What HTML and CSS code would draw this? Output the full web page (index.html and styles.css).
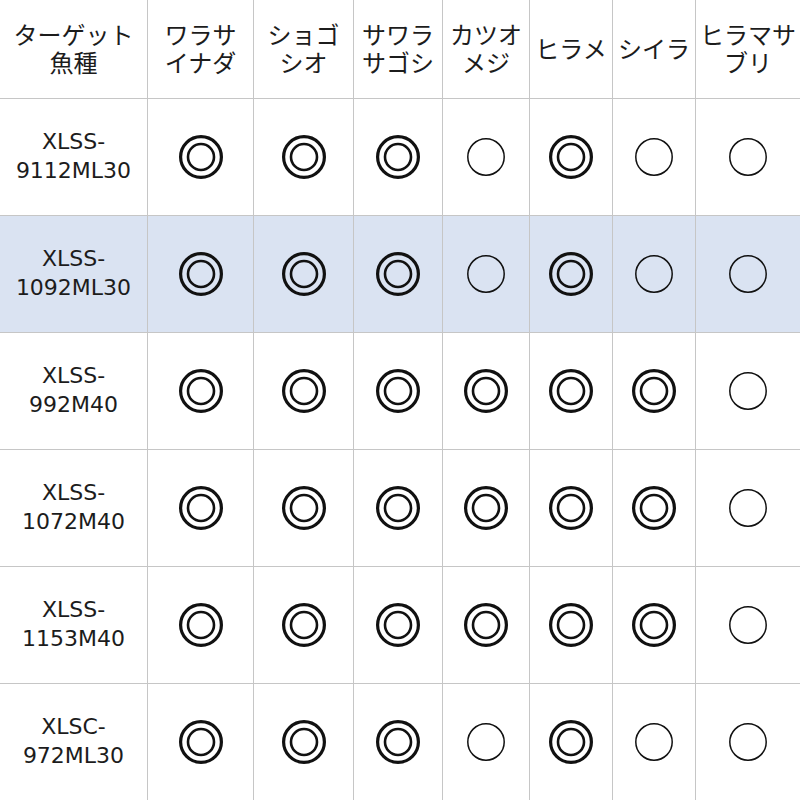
FILE: index.html
```html
<!DOCTYPE html>
<html lang="ja">
<head>
<meta charset="utf-8">
<link rel="stylesheet" href="styles.css">
</head>
<body>
<div class="chart">
  <div class="cell head">ターゲット<br>魚種</div>
  <div class="cell head">ワラサ<br>イナダ</div>
  <div class="cell head">ショゴ<br>シオ</div>
  <div class="cell head">サワラ<br>サゴシ</div>
  <div class="cell head">カツオ<br>メジ</div>
  <div class="cell head">ヒラメ</div>
  <div class="cell head">シイラ</div>
  <div class="cell head">ヒラマサ<br>ブリ</div>

  <div class="cell name">XLSS-<br>9112ML30</div>
  <div class="cell"><svg class="dbl" viewBox="0 0 46 46"><circle cx="23" cy="23" r="20.4"/><circle class="in" cx="23" cy="23" r="13"/></svg></div>
  <div class="cell"><svg class="dbl" viewBox="0 0 46 46"><circle cx="23" cy="23" r="20.4"/><circle class="in" cx="23" cy="23" r="13"/></svg></div>
  <div class="cell"><svg class="dbl" viewBox="0 0 46 46"><circle cx="23" cy="23" r="20.4"/><circle class="in" cx="23" cy="23" r="13"/></svg></div>
  <div class="cell"><svg class="sgl" viewBox="0 0 40 40"><circle cx="20" cy="20" r="18.2"/></svg></div>
  <div class="cell"><svg class="dbl" viewBox="0 0 46 46"><circle cx="23" cy="23" r="20.4"/><circle class="in" cx="23" cy="23" r="13"/></svg></div>
  <div class="cell"><svg class="sgl" viewBox="0 0 40 40"><circle cx="20" cy="20" r="18.2"/></svg></div>
  <div class="cell"><svg class="sgl" viewBox="0 0 40 40"><circle cx="20" cy="20" r="18.2"/></svg></div>

  <div class="cell name hl">XLSS-<br>1092ML30</div>
  <div class="cell hl"><svg class="dbl" viewBox="0 0 46 46"><circle cx="23" cy="23" r="20.4"/><circle class="in" cx="23" cy="23" r="13"/></svg></div>
  <div class="cell hl"><svg class="dbl" viewBox="0 0 46 46"><circle cx="23" cy="23" r="20.4"/><circle class="in" cx="23" cy="23" r="13"/></svg></div>
  <div class="cell hl"><svg class="dbl" viewBox="0 0 46 46"><circle cx="23" cy="23" r="20.4"/><circle class="in" cx="23" cy="23" r="13"/></svg></div>
  <div class="cell hl"><svg class="sgl" viewBox="0 0 40 40"><circle cx="20" cy="20" r="18.2"/></svg></div>
  <div class="cell hl"><svg class="dbl" viewBox="0 0 46 46"><circle cx="23" cy="23" r="20.4"/><circle class="in" cx="23" cy="23" r="13"/></svg></div>
  <div class="cell hl"><svg class="sgl" viewBox="0 0 40 40"><circle cx="20" cy="20" r="18.2"/></svg></div>
  <div class="cell hl"><svg class="sgl" viewBox="0 0 40 40"><circle cx="20" cy="20" r="18.2"/></svg></div>

  <div class="cell name">XLSS-<br>992M40</div>
  <div class="cell"><svg class="dbl" viewBox="0 0 46 46"><circle cx="23" cy="23" r="20.4"/><circle class="in" cx="23" cy="23" r="13"/></svg></div>
  <div class="cell"><svg class="dbl" viewBox="0 0 46 46"><circle cx="23" cy="23" r="20.4"/><circle class="in" cx="23" cy="23" r="13"/></svg></div>
  <div class="cell"><svg class="dbl" viewBox="0 0 46 46"><circle cx="23" cy="23" r="20.4"/><circle class="in" cx="23" cy="23" r="13"/></svg></div>
  <div class="cell"><svg class="dbl" viewBox="0 0 46 46"><circle cx="23" cy="23" r="20.4"/><circle class="in" cx="23" cy="23" r="13"/></svg></div>
  <div class="cell"><svg class="dbl" viewBox="0 0 46 46"><circle cx="23" cy="23" r="20.4"/><circle class="in" cx="23" cy="23" r="13"/></svg></div>
  <div class="cell"><svg class="dbl" viewBox="0 0 46 46"><circle cx="23" cy="23" r="20.4"/><circle class="in" cx="23" cy="23" r="13"/></svg></div>
  <div class="cell"><svg class="sgl" viewBox="0 0 40 40"><circle cx="20" cy="20" r="18.2"/></svg></div>

  <div class="cell name">XLSS-<br>1072M40</div>
  <div class="cell"><svg class="dbl" viewBox="0 0 46 46"><circle cx="23" cy="23" r="20.4"/><circle class="in" cx="23" cy="23" r="13"/></svg></div>
  <div class="cell"><svg class="dbl" viewBox="0 0 46 46"><circle cx="23" cy="23" r="20.4"/><circle class="in" cx="23" cy="23" r="13"/></svg></div>
  <div class="cell"><svg class="dbl" viewBox="0 0 46 46"><circle cx="23" cy="23" r="20.4"/><circle class="in" cx="23" cy="23" r="13"/></svg></div>
  <div class="cell"><svg class="dbl" viewBox="0 0 46 46"><circle cx="23" cy="23" r="20.4"/><circle class="in" cx="23" cy="23" r="13"/></svg></div>
  <div class="cell"><svg class="dbl" viewBox="0 0 46 46"><circle cx="23" cy="23" r="20.4"/><circle class="in" cx="23" cy="23" r="13"/></svg></div>
  <div class="cell"><svg class="dbl" viewBox="0 0 46 46"><circle cx="23" cy="23" r="20.4"/><circle class="in" cx="23" cy="23" r="13"/></svg></div>
  <div class="cell"><svg class="sgl" viewBox="0 0 40 40"><circle cx="20" cy="20" r="18.2"/></svg></div>

  <div class="cell name">XLSS-<br>1153M40</div>
  <div class="cell"><svg class="dbl" viewBox="0 0 46 46"><circle cx="23" cy="23" r="20.4"/><circle class="in" cx="23" cy="23" r="13"/></svg></div>
  <div class="cell"><svg class="dbl" viewBox="0 0 46 46"><circle cx="23" cy="23" r="20.4"/><circle class="in" cx="23" cy="23" r="13"/></svg></div>
  <div class="cell"><svg class="dbl" viewBox="0 0 46 46"><circle cx="23" cy="23" r="20.4"/><circle class="in" cx="23" cy="23" r="13"/></svg></div>
  <div class="cell"><svg class="dbl" viewBox="0 0 46 46"><circle cx="23" cy="23" r="20.4"/><circle class="in" cx="23" cy="23" r="13"/></svg></div>
  <div class="cell"><svg class="dbl" viewBox="0 0 46 46"><circle cx="23" cy="23" r="20.4"/><circle class="in" cx="23" cy="23" r="13"/></svg></div>
  <div class="cell"><svg class="dbl" viewBox="0 0 46 46"><circle cx="23" cy="23" r="20.4"/><circle class="in" cx="23" cy="23" r="13"/></svg></div>
  <div class="cell"><svg class="sgl" viewBox="0 0 40 40"><circle cx="20" cy="20" r="18.2"/></svg></div>

  <div class="cell name">XLSC-<br>972ML30</div>
  <div class="cell"><svg class="dbl" viewBox="0 0 46 46"><circle cx="23" cy="23" r="20.4"/><circle class="in" cx="23" cy="23" r="13"/></svg></div>
  <div class="cell"><svg class="dbl" viewBox="0 0 46 46"><circle cx="23" cy="23" r="20.4"/><circle class="in" cx="23" cy="23" r="13"/></svg></div>
  <div class="cell"><svg class="dbl" viewBox="0 0 46 46"><circle cx="23" cy="23" r="20.4"/><circle class="in" cx="23" cy="23" r="13"/></svg></div>
  <div class="cell"><svg class="sgl" viewBox="0 0 40 40"><circle cx="20" cy="20" r="18.2"/></svg></div>
  <div class="cell"><svg class="dbl" viewBox="0 0 46 46"><circle cx="23" cy="23" r="20.4"/><circle class="in" cx="23" cy="23" r="13"/></svg></div>
  <div class="cell"><svg class="sgl" viewBox="0 0 40 40"><circle cx="20" cy="20" r="18.2"/></svg></div>
  <div class="cell"><svg class="sgl" viewBox="0 0 40 40"><circle cx="20" cy="20" r="18.2"/></svg></div>
</div>
</body>
</html>
```

FILE: styles.css
```css
html, body {
  margin: 0;
  padding: 0;
  background: #ffffff;
}

.chart {
  width: 800px;
  height: 800px;
  display: grid;
  grid-template-columns: 147px 106px 100px 89px 87px 83px 83px 105px;
  grid-template-rows: 98px repeat(6, 117px);
  font-family: "DejaVu Sans", "Noto Sans CJK JP", sans-serif;
  color: #1c1c1c;
  font-size: 22px;
  line-height: 28px;
  background: #ffffff;
}

.cell {
  box-sizing: border-box;
  display: flex;
  align-items: center;
  justify-content: center;
  text-align: center;
  border-left: 1px solid #c6c6c6;
  border-top: 1px solid #c6c6c6;
}

.cell:nth-child(8n+1) {
  border-left: none;
}

.head {
  border-top: none;
  font-family: "Noto Sans CJK JP", sans-serif;
  font-size: 24px;
  line-height: 28px;
  padding-bottom: 3px;
  white-space: nowrap;
}

.name {
  font-size: 22px;
  line-height: 29px;
  padding-bottom: 2px;
}

.hl {
  background: #dae3f2;
}

svg {
  display: block;
  fill: none;
  stroke: #111111;
}

.dbl {
  width: 46px;
  height: 46px;
  stroke-width: 3.2;
}

.dbl .in {
  stroke-width: 2.6;
}

.sgl {
  width: 40px;
  height: 40px;
  stroke-width: 1.5;
}
```
